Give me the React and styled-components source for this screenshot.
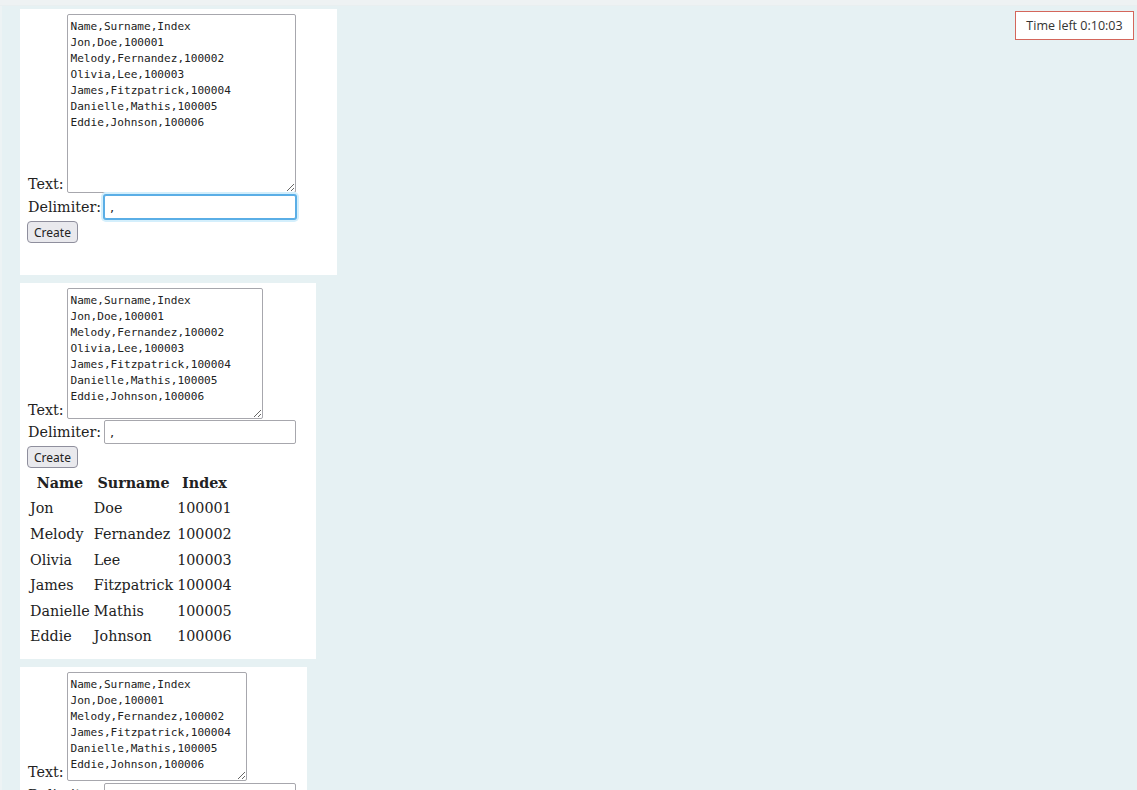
import React from "react";
import styled, { createGlobalStyle } from "styled-components";

const GlobalStyle = createGlobalStyle`
  html, body {
    margin: 0;
    padding: 0;
    background: #e6f1f3;
    font-family: "DejaVu Serif", "Liberation Serif", serif;
    color: #222;
  }
`;

const TopBar = styled.div`
  height: 5px;
  background: #eef2f3;
  border-bottom: 1px solid #e9eff0;
`;

const Page = styled.div`
  min-height: 790px;
  border-left: 2px solid #edf3f4;
  padding: 3px 0 0 18px;
  display: flex;
  flex-direction: column;
  align-items: flex-start;
  gap: 8px;
`;

const Card = styled.div`
  background: #fff;
  width: ${(p) => p.$width}px;
  box-sizing: border-box;
  padding: 5px 7px ${(p) => p.$pb}px 7px;
  font-size: 14px;
`;

const FieldRow = styled.div`
  display: flex;
  align-items: ${(p) => (p.$bottom ? "flex-end" : "center")};
  gap: 3px;
  margin-top: ${(p) => p.$mt || 0}px;
  padding-left: 1px;
`;

const Label = styled.span`
  font-size: 14.3px;
  line-height: 18px;
`;

const TextBox = styled.textarea`
  width: ${(p) => p.$w}px;
  height: ${(p) => p.$h}px;
  box-sizing: border-box;
  margin: 0;
  padding: 4px 3px;
  border: 1px solid #a7a7ad;
  border-radius: 2px;
  font-family: "DejaVu Sans Mono", "Liberation Mono", monospace;
  font-size: 11.1px;
  line-height: 16px;
  color: #222;
  background: #fff;
  outline: none;
  overflow: hidden;
`;

const DelimInput = styled.input`
  width: 192px;
  height: 24px;
  box-sizing: border-box;
  margin: 0;
  padding: 2px 5px;
  border: 1px solid ${(p) => (p.$focused ? "#5aaee6" : "#a7a7ad")};
  border-radius: 2px;
  box-shadow: ${(p) =>
    p.$focused ? "0 0 0 1px #5aaee6, 0 0 0 3px #d4effc" : "none"};
  font-family: "DejaVu Sans", "Liberation Sans", sans-serif;
  font-size: 13px;
  color: #222;
  outline: none;
  caret-color: #222;
`;

const CreateButton = styled.button`
  display: block;
  margin-top: 2px;
  height: 22px;
  padding: 0 6px;
  border: 1px solid #8f8f9d;
  border-radius: 4px;
  background: #e9e9ed;
  font-family: "Noto Sans", "Open Sans", sans-serif;
  font-size: 12px;
  color: #222;
`;

const Table = styled.table`
  margin-top: 1px;
  border-spacing: 2px;
  font-size: 14.3px;
`;

const Th = styled.th`
  padding: 1px;
  height: 21.6px;
  font-weight: bold;
  text-align: center;
`;

const Td = styled.td`
  padding: 1px;
  height: 21.6px;
  text-align: left;
`;

const Timer = styled.div`
  position: fixed;
  top: 11px;
  right: 3px;
  width: 119px;
  height: 29px;
  box-sizing: border-box;
  border: 1px solid #d4665b;
  background: #fff;
  display: flex;
  align-items: center;
  justify-content: center;
  font-family: "Open Sans", "Noto Sans", sans-serif;
  font-size: 12.5px;
  color: #333;
`;

const rows = [
  ["Jon", "Doe", "100001"],
  ["Melody", "Fernandez", "100002"],
  ["Olivia", "Lee", "100003"],
  ["James", "Fitzpatrick", "100004"],
  ["Danielle", "Mathis", "100005"],
  ["Eddie", "Johnson", "100006"],
];

const fullText = ["Name,Surname,Index", ...rows.map((r) => r.join(","))].join(
  "\n"
);
const shortText = [
  "Name,Surname,Index",
  ...rows.filter((r) => r[0] !== "Olivia").map((r) => r.join(",")),
].join("\n");

const cards = [
  { width: 317, pb: 32, tw: 229, th: 179, text: fullText, focused: true },
  { width: 296, pb: 9, tw: 196, th: 131, text: fullText, table: true },
  { width: 287, pb: 10, tw: 180, th: 109, text: shortText },
];

const CsvCard = ({ card }) => (
  <Card $width={card.width} $pb={card.pb}>
    <FieldRow $bottom>
      <Label>Text:</Label>
      <TextBox $w={card.tw} $h={card.th} defaultValue={card.text} readOnly />
    </FieldRow>
    <FieldRow $mt={card.table ? 1 : 2}>
      <Label>Delimiter:</Label>
      <DelimInput
        defaultValue=","
        $focused={card.focused}
        autoFocus={card.focused}
      />
    </FieldRow>
    <CreateButton>Create</CreateButton>
    {card.table && (
      <Table>
        <thead>
          <tr>
            <Th>Name</Th>
            <Th>Surname</Th>
            <Th>Index</Th>
          </tr>
        </thead>
        <tbody>
          {rows.map((r) => (
            <tr key={r[2]}>
              {r.map((c) => (
                <Td key={c}>{c}</Td>
              ))}
            </tr>
          ))}
        </tbody>
      </Table>
    )}
  </Card>
);

export default function App() {
  return (
    <>
      <GlobalStyle />
      <TopBar />
      <Page>
        {cards.map((c, i) => (
          <CsvCard key={i} card={c} />
        ))}
      </Page>
      <Timer>Time left 0:10:03</Timer>
    </>
  );
}
